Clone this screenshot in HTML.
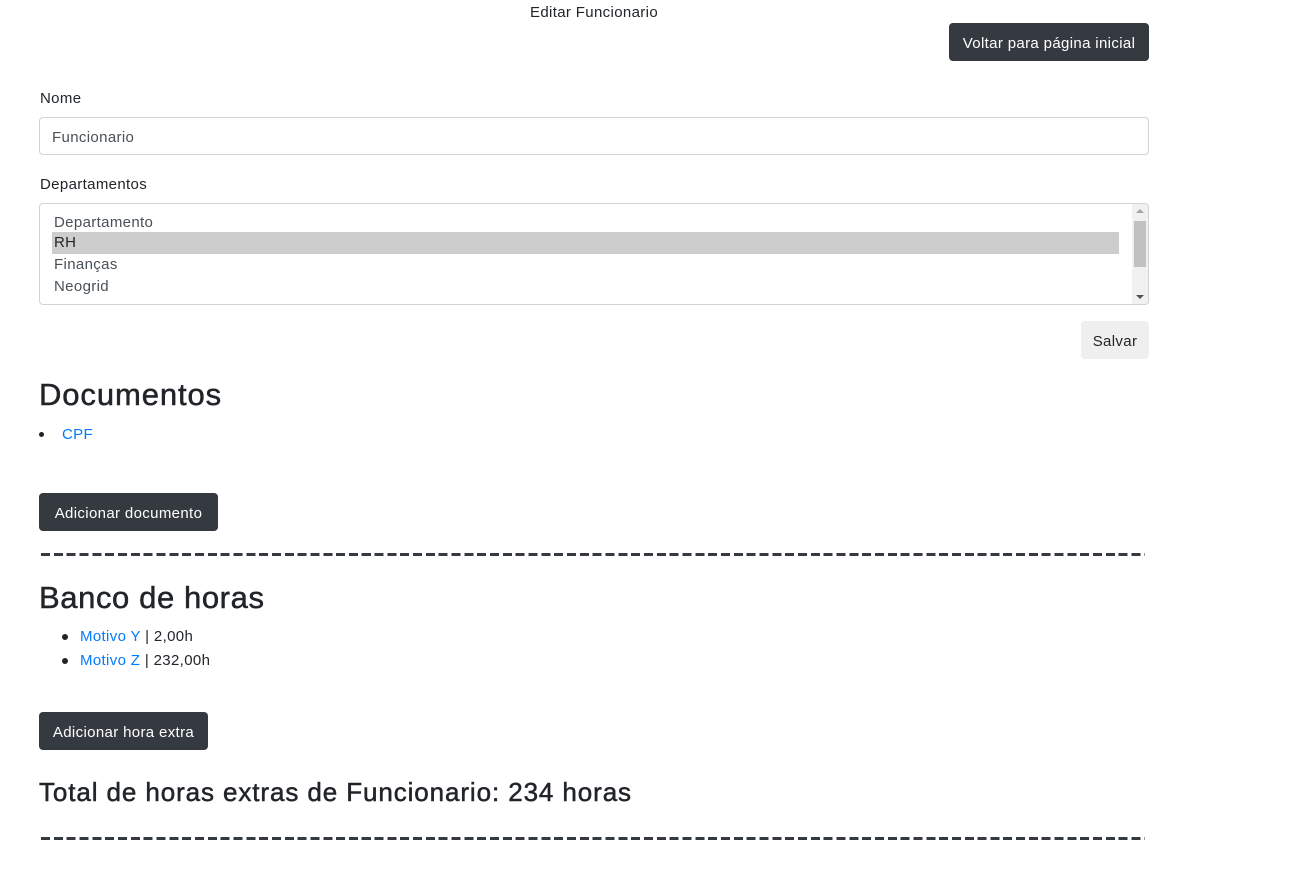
<!DOCTYPE html>
<html><head><meta charset="utf-8"><style>
body{margin:0;font-family:"Liberation Sans",sans-serif;color:#212529;font-size:15px;background:#fff;letter-spacing:0.35px}
.abs{position:absolute}
.btn-dark{background:#343a40;color:#fff;border-radius:4px;font-size:15px;display:flex;align-items:center;justify-content:center;padding-top:2px;box-sizing:border-box}
.dash{position:absolute;left:41px;width:1104px;height:3px;background:repeating-linear-gradient(90deg,#343a40 0 9px,transparent 9px 12.83px)}
a{color:#007bff;text-decoration:none}
h2{margin:0;position:absolute;font-weight:normal;-webkit-text-stroke:0.5px #212529}
</style></head><body>
<div class="abs" style="left:0;width:1188px;top:4px;text-align:center;font-size:15px">Editar Funcionario</div>
<div class="abs btn-dark" style="left:949px;top:23px;width:200px;height:38px">Voltar para página inicial</div>
<div class="abs" style="left:40px;top:90px">Nome</div>
<div class="abs" style="left:39px;top:117px;width:1108px;height:36px;border:1px solid #ced4da;border-radius:4px"><span style="position:absolute;left:12px;top:11px;color:#495057">Funcionario</span></div>
<div class="abs" style="left:40px;top:176px">Departamentos</div>
<div class="abs" style="left:39px;top:203px;width:1108px;height:100px;border:1px solid #ced4da;border-radius:4px;overflow:hidden;color:#495057">
<div style="position:absolute;left:14px;top:8px;line-height:22px">Departamento</div>
<div style="position:absolute;left:12px;top:28px;width:1067px;height:22px;background:#cdcdcd;color:#212529;line-height:22px;padding-left:2px;box-sizing:border-box">RH</div>
<div style="position:absolute;left:14px;top:50px;line-height:22px">Finanças</div>
<div style="position:absolute;left:14px;top:72px;line-height:22px">Neogrid</div>
<div style="position:absolute;right:0;top:0;width:16px;height:100px;background:#f1f1f1"></div>
<div style="position:absolute;right:2px;top:17px;width:12px;height:46px;background:#c1c1c1"></div>
<div style="position:absolute;right:4px;top:5px;border:4px solid transparent;border-bottom-color:#a3a3a3;border-top:0"></div>
<div style="position:absolute;right:4px;bottom:5px;border:4px solid transparent;border-top-color:#505050;border-bottom:0"></div>
</div>
<div class="abs" style="left:1081px;top:321px;width:68px;height:38px;background:#efefef;border-radius:4px;display:flex;align-items:center;justify-content:center;padding-top:2px;box-sizing:border-box">Salvar</div>
<h2 style="left:39px;top:377px;font-size:31px;letter-spacing:0.9px">Documentos</h2>
<div class="abs" style="left:39px;top:426px"><span style="position:absolute;left:0;top:6px;width:5px;height:5px;border-radius:50%;background:#212529"></span><a style="position:absolute;left:23px;top:0">CPF</a></div>
<div class="abs btn-dark" style="left:39px;top:493px;width:179px;height:38px">Adicionar documento</div>
<div class="dash" style="top:553px"></div>
<h2 style="left:39px;top:580px;font-size:31px;letter-spacing:0.6px">Banco de horas</h2>
<div class="abs" style="left:62px;top:625px;line-height:24px">
<div><span style="display:inline-block;width:6px;height:6px;border-radius:50%;background:#212529;margin-right:12px;vertical-align:middle"></span><a>Motivo Y</a> | 2,00h</div>
<div><span style="display:inline-block;width:6px;height:6px;border-radius:50%;background:#212529;margin-right:12px;vertical-align:middle"></span><a>Motivo Z</a> | 232,00h</div>
</div>
<div class="abs btn-dark" style="left:39px;top:712px;width:169px;height:38px">Adicionar hora extra</div>
<h2 style="left:39px;top:777px;font-size:26px;letter-spacing:0.9px">Total de horas extras de Funcionario: 234 horas</h2>
<div class="dash" style="top:837px"></div>
</body></html>
